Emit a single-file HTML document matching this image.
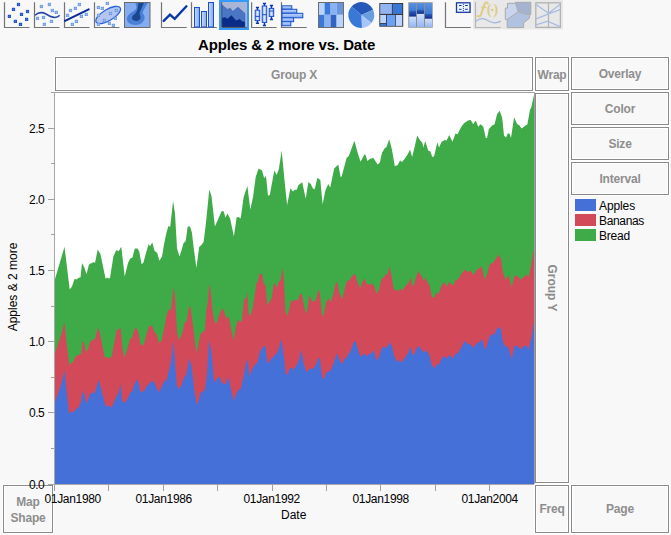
<!DOCTYPE html>
<html><head><meta charset="utf-8"><style>
html,body{margin:0;padding:0;}
body{width:671px;height:535px;background:#f8f8f8;position:relative;overflow:hidden;font-family:"Liberation Sans",sans-serif;}
.box{position:absolute;box-sizing:border-box;border:1px solid #8a8a8a;box-shadow:0 0 0 1px #fff, inset 0 0 0 1px #fff;color:#8e8e8e;font-weight:bold;font-size:12px;text-align:center;letter-spacing:-0.2px;}
.t{position:absolute;white-space:nowrap;}
svg{position:absolute;left:0;top:0;}
</style></head><body>
<svg width="671" height="535" viewBox="0 0 671 535">
<defs>
<linearGradient id="barg" x1="0" y1="0" x2="1" y2="0"><stop offset="0" stop-color="#c8dcff"/><stop offset="1" stop-color="#80a8f0"/></linearGradient><linearGradient id="boxg" x1="0" y1="0" x2="1" y2="0"><stop offset="0" stop-color="#80a8f0"/><stop offset="0.5" stop-color="#dce8ff"/><stop offset="1" stop-color="#80a8f0"/></linearGradient>
<linearGradient id="barh" x1="0" y1="0" x2="0" y2="1"><stop offset="0" stop-color="#c8dcff"/><stop offset="1" stop-color="#78a2ee"/></linearGradient>
<linearGradient id="mz1" x1="0" y1="0" x2="0" y2="1"><stop offset="0" stop-color="#5b92e2"/><stop offset="1" stop-color="#3a7ad8"/></linearGradient><linearGradient id="mz2" x1="0" y1="0" x2="0" y2="1"><stop offset="0" stop-color="#2f5fb8"/><stop offset="1" stop-color="#0a2d92"/></linearGradient><linearGradient id="mz3" x1="0" y1="0" x2="0" y2="1"><stop offset="0" stop-color="#cfe0ff"/><stop offset="1" stop-color="#94b6f2"/></linearGradient>
</defs>
<path d="M4.5,2.3 V27.5 H29.5" fill="none" stroke="#747474" stroke-width="1.2"/>
<rect x="16.9" y="2.9" width="3.2" height="3.2" fill="#1a4cc0"/><rect x="18.25" y="2.9" width="0.5" height="3.2" fill="#4d7ddc"/><rect x="16.9" y="4.25" width="3.2" height="0.5" fill="#4d7ddc"/>
<rect x="11.9" y="7.8" width="3.2" height="3.2" fill="#1a4cc0"/><rect x="13.25" y="7.8" width="0.5" height="3.2" fill="#4d7ddc"/><rect x="11.9" y="9.15" width="3.2" height="0.5" fill="#4d7ddc"/>
<rect x="25.9" y="9.9" width="3.2" height="3.2" fill="#1a4cc0"/><rect x="27.25" y="9.9" width="0.5" height="3.2" fill="#4d7ddc"/><rect x="25.9" y="11.25" width="3.2" height="0.5" fill="#4d7ddc"/>
<rect x="19.9" y="12.8" width="3.2" height="3.2" fill="#1a4cc0"/><rect x="21.25" y="12.8" width="0.5" height="3.2" fill="#4d7ddc"/><rect x="19.9" y="14.15" width="3.2" height="0.5" fill="#4d7ddc"/>
<rect x="7.8" y="14.8" width="3.2" height="3.2" fill="#1a4cc0"/><rect x="9.15" y="14.8" width="0.5" height="3.2" fill="#4d7ddc"/><rect x="7.8" y="16.15" width="3.2" height="0.5" fill="#4d7ddc"/>
<rect x="25.0" y="17.8" width="3.2" height="3.2" fill="#1a4cc0"/><rect x="26.35" y="17.8" width="0.5" height="3.2" fill="#4d7ddc"/><rect x="25.0" y="19.15" width="3.2" height="0.5" fill="#4d7ddc"/>
<rect x="13.8" y="19.8" width="3.2" height="3.2" fill="#1a4cc0"/><rect x="15.15" y="19.8" width="0.5" height="3.2" fill="#4d7ddc"/><rect x="13.8" y="21.15" width="3.2" height="0.5" fill="#4d7ddc"/>
<rect x="18.9" y="22.8" width="3.2" height="3.2" fill="#1a4cc0"/><rect x="20.25" y="22.8" width="0.5" height="3.2" fill="#4d7ddc"/><rect x="18.9" y="24.15" width="3.2" height="0.5" fill="#4d7ddc"/>
<path d="M34.5,2.3 V27.5 H59.5" fill="none" stroke="#747474" stroke-width="1.2"/>
<rect x="39.8" y="4.9" width="3.2" height="3.2" fill="#6a96e4"/><rect x="41.15" y="4.9" width="0.5" height="3.2" fill="#a6c2f2"/><rect x="39.8" y="6.25" width="3.2" height="0.5" fill="#a6c2f2"/>
<rect x="47.8" y="2.9" width="3.2" height="3.2" fill="#6a96e4"/><rect x="49.15" y="2.9" width="0.5" height="3.2" fill="#a6c2f2"/><rect x="47.8" y="4.25" width="3.2" height="0.5" fill="#a6c2f2"/>
<rect x="50.8" y="8.9" width="3.2" height="3.2" fill="#6a96e4"/><rect x="52.15" y="8.9" width="0.5" height="3.2" fill="#a6c2f2"/><rect x="50.8" y="10.25" width="3.2" height="0.5" fill="#a6c2f2"/>
<rect x="54.7" y="10.8" width="3.2" height="3.2" fill="#6a96e4"/><rect x="56.05" y="10.8" width="0.5" height="3.2" fill="#a6c2f2"/><rect x="54.7" y="12.15" width="3.2" height="0.5" fill="#a6c2f2"/>
<rect x="35.9" y="16.8" width="3.2" height="3.2" fill="#6a96e4"/><rect x="37.25" y="16.8" width="0.5" height="3.2" fill="#a6c2f2"/><rect x="35.9" y="18.15" width="3.2" height="0.5" fill="#a6c2f2"/>
<rect x="41.9" y="15.9" width="3.2" height="3.2" fill="#6a96e4"/><rect x="43.25" y="15.9" width="0.5" height="3.2" fill="#a6c2f2"/><rect x="41.9" y="17.25" width="3.2" height="0.5" fill="#a6c2f2"/>
<rect x="49.9" y="19.8" width="3.2" height="3.2" fill="#6a96e4"/><rect x="51.25" y="19.8" width="0.5" height="3.2" fill="#a6c2f2"/><rect x="49.9" y="21.15" width="3.2" height="0.5" fill="#a6c2f2"/>
<rect x="42.8" y="22.8" width="3.2" height="3.2" fill="#6a96e4"/><rect x="44.15" y="22.8" width="0.5" height="3.2" fill="#a6c2f2"/><rect x="42.8" y="24.15" width="3.2" height="0.5" fill="#a6c2f2"/>
<path d="M35,15.3 C38,12.5 42,11.8 46,14 C50,16.5 53,17.8 56,17.3 C58,17 59,16 59.6,15.3" fill="none" stroke="#2548a8" stroke-width="1.5"/>
<path d="M64.5,2.3 V27.5 H89.5" fill="none" stroke="#747474" stroke-width="1.2"/>
<rect x="77.8" y="2.9" width="3.2" height="3.2" fill="#6a96e4"/><rect x="79.15" y="2.9" width="0.5" height="3.2" fill="#a6c2f2"/><rect x="77.8" y="4.25" width="3.2" height="0.5" fill="#a6c2f2"/>
<rect x="73.8" y="6.8" width="3.2" height="3.2" fill="#6a96e4"/><rect x="75.15" y="6.8" width="0.5" height="3.2" fill="#a6c2f2"/><rect x="73.8" y="8.15" width="3.2" height="0.5" fill="#a6c2f2"/>
<rect x="68.9" y="8.9" width="3.2" height="3.2" fill="#6a96e4"/><rect x="70.25" y="8.9" width="0.5" height="3.2" fill="#a6c2f2"/><rect x="68.9" y="10.25" width="3.2" height="0.5" fill="#a6c2f2"/>
<rect x="65.9" y="13.8" width="3.2" height="3.2" fill="#6a96e4"/><rect x="67.25" y="13.8" width="0.5" height="3.2" fill="#a6c2f2"/><rect x="65.9" y="15.15" width="3.2" height="0.5" fill="#a6c2f2"/>
<rect x="84.7" y="12.8" width="3.2" height="3.2" fill="#6a96e4"/><rect x="86.05" y="12.8" width="0.5" height="3.2" fill="#a6c2f2"/><rect x="84.7" y="14.15" width="3.2" height="0.5" fill="#a6c2f2"/>
<rect x="79.8" y="14.8" width="3.2" height="3.2" fill="#6a96e4"/><rect x="81.15" y="14.8" width="0.5" height="3.2" fill="#a6c2f2"/><rect x="79.8" y="16.15" width="3.2" height="0.5" fill="#a6c2f2"/>
<rect x="74.8" y="19.8" width="3.2" height="3.2" fill="#6a96e4"/><rect x="76.15" y="19.8" width="0.5" height="3.2" fill="#a6c2f2"/><rect x="74.8" y="21.15" width="3.2" height="0.5" fill="#a6c2f2"/>
<rect x="70.8" y="22.8" width="3.2" height="3.2" fill="#6a96e4"/><rect x="72.15" y="22.8" width="0.5" height="3.2" fill="#a6c2f2"/><rect x="70.8" y="24.15" width="3.2" height="0.5" fill="#a6c2f2"/>
<path d="M65,20.9 L88.7,9.4" stroke="#0b2b98" stroke-width="2.1" stroke-linecap="round"/>
<path d="M94.5,2.3 V27.5 H119.5" fill="none" stroke="#747474" stroke-width="1.2"/>
<ellipse cx="108.2" cy="15" rx="14" ry="5.6" transform="rotate(-31 108.2 15)" fill="#b4c6f0" stroke="#2a64dc" stroke-width="1.3"/>
<rect x="105.7" y="1.9" width="3.2" height="3.2" fill="#6a96e4"/><rect x="107.05" y="1.9" width="0.5" height="3.2" fill="#a6c2f2"/><rect x="105.7" y="3.25" width="3.2" height="0.5" fill="#a6c2f2"/>
<rect x="96.8" y="5.9" width="3.2" height="3.2" fill="#6a96e4"/><rect x="98.15" y="5.9" width="0.5" height="3.2" fill="#a6c2f2"/><rect x="96.8" y="7.25" width="3.2" height="0.5" fill="#a6c2f2"/>
<rect x="100.8" y="6.8" width="3.2" height="3.2" fill="#6a96e4"/><rect x="102.15" y="6.8" width="0.5" height="3.2" fill="#a6c2f2"/><rect x="100.8" y="8.15" width="3.2" height="0.5" fill="#a6c2f2"/>
<rect x="114.7" y="8.9" width="3.2" height="3.2" fill="#6a96e4"/><rect x="116.05" y="8.9" width="0.5" height="3.2" fill="#a6c2f2"/><rect x="114.7" y="10.25" width="3.2" height="0.5" fill="#a6c2f2"/>
<rect x="108.9" y="11.9" width="3.2" height="3.2" fill="#6a96e4"/><rect x="110.25" y="11.9" width="0.5" height="3.2" fill="#a6c2f2"/><rect x="108.9" y="13.25" width="3.2" height="0.5" fill="#a6c2f2"/>
<rect x="96.8" y="13.8" width="3.2" height="3.2" fill="#6a96e4"/><rect x="98.15" y="13.8" width="0.5" height="3.2" fill="#a6c2f2"/><rect x="96.8" y="15.15" width="3.2" height="0.5" fill="#a6c2f2"/>
<rect x="113.8" y="16.8" width="3.2" height="3.2" fill="#6a96e4"/><rect x="115.15" y="16.8" width="0.5" height="3.2" fill="#a6c2f2"/><rect x="113.8" y="18.15" width="3.2" height="0.5" fill="#a6c2f2"/>
<rect x="102.8" y="18.9" width="3.2" height="3.2" fill="#6a96e4"/><rect x="104.15" y="18.9" width="0.5" height="3.2" fill="#a6c2f2"/><rect x="102.8" y="20.25" width="3.2" height="0.5" fill="#a6c2f2"/>
<rect x="107.8" y="21.8" width="3.2" height="3.2" fill="#6a96e4"/><rect x="109.15" y="21.8" width="0.5" height="3.2" fill="#a6c2f2"/><rect x="107.8" y="23.15" width="3.2" height="0.5" fill="#a6c2f2"/>
<rect x="96.8" y="22.8" width="3.2" height="3.2" fill="#6a96e4"/><rect x="98.15" y="22.8" width="0.5" height="3.2" fill="#a6c2f2"/><rect x="96.8" y="24.15" width="3.2" height="0.5" fill="#a6c2f2"/>
<rect x="111.8" y="23.8" width="3.2" height="3.2" fill="#6a96e4"/><rect x="113.15" y="23.8" width="0.5" height="3.2" fill="#a6c2f2"/><rect x="111.8" y="25.15" width="3.2" height="0.5" fill="#a6c2f2"/>
<rect x="124.5" y="2.5" width="25.5" height="25" fill="#86acf0" stroke="#6b6b6b" stroke-width="1"/>
<path d="M135.3,3 L147.8,3 C146,6 143.5,10 142.5,13 C146,16 145.5,22 139,24.5 C132,26 126,23 127,18 C128,13 134,12 136,9 C137,7 136,5 135.3,3 Z" fill="#4a7fd6"/>
<path d="M138.5,3 L144,3 C142,7 140,11 139.5,14 C141.5,17 140.5,21 136.5,21 C132,21 131,17.5 133,15.5 C135,14 137,12 137.5,9 Z" fill="#1b4690"/>
<path d="M161.5,2.3 V27.5 H186.7" fill="none" stroke="#747474" stroke-width="1.2"/>
<path d="M163.7,20.9 L170,14.7 L174.7,18.8 L186.4,6.3" fill="none" stroke="#0b38a8" stroke-width="2.4" stroke-linecap="round" stroke-linejoin="miter"/>
<path d="M191.5,2.3 V27.5 H216.7" fill="none" stroke="#747474" stroke-width="1.2"/>
<rect x="194.5" y="7.5" width="5.0" height="19.5" fill="url(#barg)" stroke="#1a50d0" stroke-width="1"/>
<rect x="201.5" y="11.5" width="5.0" height="15.5" fill="url(#barg)" stroke="#1a50d0" stroke-width="1"/>
<rect x="208.5" y="2.5" width="5.0" height="24.5" fill="url(#barg)" stroke="#1a50d0" stroke-width="1"/>
<rect x="219" y="0" width="30" height="30" fill="#3399ff"/>
<rect x="221" y="2" width="26" height="26" fill="#a9b5d6"/>
<path d="M222,5.1 L227.4,9.5 L230.2,8.3 L232.8,11.5 L237.9,7.3 L244.9,13.4 L244.9,27 L222,27 Z" fill="#4b76c4" stroke="#2b58b0" stroke-width="0.6"/>
<path d="M222,18.1 L225.1,17.2 L227.4,18.8 L231.5,15.3 L236,20.4 L239.8,19.1 L242,21.3 L244.9,22 L244.9,27 L222,27 Z" fill="#0b2b88"/>
<path d="M221.7,2.2 V27.4 H246.8" fill="none" stroke="#555" stroke-width="1"/>
<path d="M251.6,2.3 V27.5 H276.7" fill="none" stroke="#747474" stroke-width="1.2"/>
<path d="M257.45,7.5 V10.2 M257.45,20.6 V23.3 M255.85,7.5 H259.05 M255.85,23.3 H259.05" stroke="#0b3aa8" stroke-width="1.5"/>
<rect x="255.2" y="10.2" width="4.5" height="10.400000000000002" fill="url(#boxg)" stroke="#1a50d0" stroke-width="1"/>
<path d="M255.2,16.4 H259.7" stroke="#1a50d0" stroke-width="1"/>
<path d="M264.45,3.5 V6 M264.45,22.4 V25.4 M262.84999999999997,3.5 H266.05 M262.84999999999997,25.4 H266.05" stroke="#0b3aa8" stroke-width="1.5"/>
<rect x="262.2" y="6" width="4.5" height="16.4" fill="url(#boxg)" stroke="#1a50d0" stroke-width="1"/>
<path d="M262.2,14.7 H266.7" stroke="#1a50d0" stroke-width="1"/>
<path d="M271.45,5.5 V8.4 M271.45,16.4 V19.4 M269.84999999999997,5.5 H273.05 M269.84999999999997,19.4 H273.05" stroke="#0b3aa8" stroke-width="1.5"/>
<rect x="269.2" y="8.4" width="4.5" height="7.999999999999998" fill="url(#boxg)" stroke="#1a50d0" stroke-width="1"/>
<path d="M269.2,11 H273.7" stroke="#1a50d0" stroke-width="1"/>
<path d="M281.5,2.3 V27.5 H306.8" fill="none" stroke="#747474" stroke-width="1.2"/>
<rect x="282" y="5.8" width="9.800000000000011" height="3.500000000000001" fill="url(#barh)" stroke="#1a50d0" stroke-width="1"/>
<rect x="282" y="9.3" width="14.800000000000011" height="4.0" fill="url(#barh)" stroke="#1a50d0" stroke-width="1"/>
<rect x="282" y="13.3" width="20.80000000000001" height="4.5" fill="url(#barh)" stroke="#1a50d0" stroke-width="1"/>
<rect x="282" y="17.8" width="11.600000000000023" height="3.8999999999999986" fill="url(#barh)" stroke="#1a50d0" stroke-width="1"/>
<rect x="282" y="21.7" width="8.800000000000011" height="4.100000000000001" fill="url(#barh)" stroke="#1a50d0" stroke-width="1"/>
<rect x="318.5" y="2.5" width="6.100000000000023" height="12.3" fill="#b9d3ff"/>
<rect x="318.5" y="14.8" width="6.100000000000023" height="12.7" fill="#3b78d9"/>
<rect x="324.6" y="2.5" width="6.0" height="12.3" fill="#3b78d9"/>
<rect x="324.6" y="14.8" width="6.0" height="12.7" fill="#8ab1f1"/>
<rect x="330.6" y="2.5" width="6.0" height="12.3" fill="#8ab1f1"/>
<rect x="330.6" y="14.8" width="6.0" height="12.7" fill="#3263c2"/>
<rect x="336.6" y="2.5" width="6.899999999999977" height="12.3" fill="#6a95dc"/>
<rect x="336.6" y="14.8" width="6.899999999999977" height="12.7" fill="#b9d3ff"/>
<rect x="318.5" y="2.5" width="25" height="25" fill="none" stroke="#6e6e6e" stroke-width="1"/>
<path d="M361.3,15 L351.56,6.54 A12.9,12.9 0 0 1 373.08,9.75 Z" fill="#2457b8"/>
<path d="M361.3,15 L373.08,9.75 A12.9,12.9 0 0 1 371.47,22.94 Z" fill="#6a9de0"/>
<path d="M361.3,15 L371.47,22.94 A12.9,12.9 0 0 1 361.98,27.88 Z" fill="#a9c5f8"/>
<path d="M361.3,15 L361.98,27.88 A12.9,12.9 0 0 1 351.56,6.54 Z" fill="#3a78d8"/>
<rect x="379.3" y="3" width="23.9" height="23.7" fill="#3a3a3a"/>
<rect x="380.2" y="3.9" width="11.699999999999989" height="10.0" fill="#93b4f0"/>
<rect x="392.7" y="3.9" width="9.5" height="10.0" fill="#3a78d8"/>
<rect x="380.2" y="15" width="5.800000000000011" height="8" fill="#b9d4ff"/>
<rect x="380.2" y="23.8" width="5.800000000000011" height="2.099999999999998" fill="#3a78d8"/>
<rect x="386.9" y="15" width="8.100000000000023" height="10.899999999999999" fill="#6aa0f8"/>
<rect x="395.8" y="15" width="6.399999999999977" height="10.899999999999999" fill="#b9d4ff"/>
<rect x="408.3" y="2.3" width="24.4" height="25.4" fill="#8e8e8e"/>
<rect x="409.2" y="3" width="6.800000000000011" height="8" fill="url(#mz1)"/>
<rect x="409.2" y="11" width="6.800000000000011" height="5.699999999999999" fill="url(#mz2)"/>
<rect x="409.2" y="16.7" width="6.800000000000011" height="10.3" fill="url(#mz3)"/>
<rect x="417" y="3" width="7" height="7" fill="url(#mz1)"/>
<rect x="417" y="10" width="7" height="3.9000000000000004" fill="url(#mz2)"/>
<rect x="417" y="13.9" width="7" height="13.1" fill="url(#mz3)"/>
<rect x="425" y="3" width="7" height="11" fill="url(#mz1)"/>
<rect x="425" y="14" width="7" height="4.800000000000001" fill="url(#mz2)"/>
<rect x="425" y="18.8" width="7" height="8.2" fill="url(#mz3)"/>
<path d="M445.5,2.3 V27.5 H470.8" fill="none" stroke="#747474" stroke-width="1.2"/>
<rect x="457.5" y="3.5" width="13.6" height="9.6" fill="#9a9a9a" opacity="0.5"/>
<rect x="456.5" y="2.8" width="13.5" height="9.5" fill="#eef4ff" stroke="#1a3aa8" stroke-width="1.3"/>
<path d="M459,5.5 H461.6 M465,5.5 H467.8 M459,9.3 H461.6 M465,9.3 H467.8" stroke="#1a3aa8" stroke-width="1"/>
<rect x="462.9" y="3.8" width="1" height="1" fill="#1a3aa8"/>
<rect x="462.9" y="6.0" width="1" height="1" fill="#1a3aa8"/>
<rect x="462.9" y="7.9" width="1" height="1" fill="#1a3aa8"/>
<rect x="462.9" y="10.0" width="1" height="1" fill="#1a3aa8"/>
<rect x="473" y="0" width="90" height="29.5" fill="#e8e8e8"/>
<path d="M475.5,2.3 V27.5 H500.8" fill="none" stroke="#b4b4b4" stroke-width="1.2"/>
<path d="M487.7,3.3 C487.3,2.1 485.3,2.0 484.4,4.4 L480.9,14.8 C480.4,16.4 479,16.8 477.6,16.1" fill="none" stroke="#e0cb88" stroke-width="2.1" stroke-linecap="round"/><path d="M481.3,7.4 H486.2" stroke="#e0cb88" stroke-width="1.5"/>
<text x="486.8" y="14" font-family="Liberation Serif" font-weight="bold" font-size="14" fill="#e0cb88">(</text><text x="493.6" y="14" font-family="Liberation Serif" font-weight="bold" font-size="14" fill="#e0cb88">)</text><circle cx="492.2" cy="10" r="1.3" fill="#e0cb88"/>
<path d="M476,21.2 C479,18.5 482,17.6 486,19.5 C490,21.8 493,23.2 496,22.7 C498.5,22.3 500,21.5 500.8,20.9" fill="none" stroke="#a2b5d8" stroke-width="1.3"/>
<path d="M507.5,3.3 L515.5,3.3 L518.2,11.7 L507.8,19.4 L505.3,19.4 L505.3,8.1 L507.5,8.1 Z" fill="#c9d5ec"/>
<path d="M515.5,2.3 L530.8,2.3 L530.8,14.4 L525.7,14.1 L521,12.3 L518.2,11.7 Z" fill="#a5b3d1"/>
<path d="M518.2,11.7 L521,12.3 L525.7,14.1 L529.6,15 L529.6,18 L523.6,23 L523.6,27.6 L507.2,27.6 L507.2,19.8 Z" fill="#b1c1e0"/>
<path d="M507.5,3.3 L515.5,3.3 L515.5,2.3 L530.8,2.3 L530.8,14.4 L529.6,15 L529.6,18 L523.6,23 L523.6,27.6 L507.2,27.6 L507.2,19.4 L505.3,19.4 L505.3,8.1 L507.5,8.1 Z M515.5,3.3 L518.2,11.7 L525.7,14.1 L530.8,14.4 M518.2,11.7 L507.5,19.4" fill="none" stroke="#a9a9a9" stroke-width="1"/>
<rect x="535.8" y="2.8" width="24.6" height="24.6" fill="none" stroke="#b2b2b2" stroke-width="1.3"/>
<path d="M548.5,2.8 V27.4" stroke="#b2b2b2" stroke-width="1.2"/>
<path d="M536,4.5 L548.5,13.2 L560,4.5 M536,18.8 L548.5,13.8 L560,9.6 M536,24.8 L548,21.2 M549,21.8 L560,26.6" fill="none" stroke="#a9bde2" stroke-width="1.3"/>
<rect x="55" y="93" width="479" height="391" fill="#fff"/>
<path d="M54,484 L54.0,281.0 L55.1,278.7 L64.5,246.8 L69.7,289.5 L72.0,286.5 L74.6,278.7 L76.4,279.4 L79.1,277.6 L80.5,277.6 L82.0,263.0 L84.3,267.5 L86.5,274.2 L88.8,265.2 L89.9,263.7 L92.1,263.0 L93.9,261.9 L95.0,263.0 L97.7,249.5 L100.4,254.0 L105.6,278.7 L107.2,277.6 L109.0,278.7 L110.1,277.6 L113.4,256.3 L116.4,250.0 L118.6,251.3 L121.3,246.8 L124.7,276.5 L128.0,263.0 L130.3,258.5 L132.5,257.4 L134.8,248.4 L137.4,248.4 L139.2,251.3 L141.5,264.1 L143.3,263.0 L146.0,252.9 L148.7,243.9 L150.0,246.2 L152.3,242.4 L154.5,250.7 L157.2,252.9 L159.4,260.8 L162.1,256.3 L163.9,245.0 L166.2,233.8 L168.4,226.0 L170.2,227.1 L173.1,201.1 L175.0,213.5 L177.0,248.2 L179.5,256.6 L181.8,249.3 L183.5,243.2 L185.7,240.9 L187.7,226.4 L190.0,226.4 L191.9,232.5 L193.6,247.1 L196.4,268.0 L199.2,247.1 L201.4,244.9 L203.6,242.0 L205.9,223.5 L209.3,189.4 L211.5,196.2 L214.9,226.5 L218.2,219.0 L221.6,211.2 L223.6,211.2 L225.5,217.4 L227.4,213.5 L230.1,218.6 L233.9,236.5 L236.6,217.5 L238.4,217.0 L240.7,218.6 L243.6,197.3 L247.4,186.1 L250.3,209.6 L253.0,197.3 L255.7,177.1 L258.6,168.6 L262.0,170.4 L264.2,178.2 L266.0,176.0 L268.0,195.7 L269.8,195.0 L274.3,170.4 L276.6,174.9 L278.8,169.3 L281.7,150.6 L284.4,179.3 L287.1,205.0 L290.5,187.9 L292.7,191.5 L295.0,189.7 L296.8,189.7 L298.3,185.2 L302.2,182.3 L305.7,198.7 L308.4,181.9 L310.7,184.1 L312.9,188.6 L314.7,189.3 L317.4,177.8 L320.3,180.1 L322.6,204.3 L325.3,190.8 L328.2,184.1 L330.2,187.5 L334.2,168.4 L338.3,164.6 L340.5,176.7 L341.6,176.7 L346.6,157.9 L348.8,156.1 L354.4,140.8 L357.3,151.6 L360.5,161.7 L364.5,154.3 L365.6,155.0 L367.4,161.0 L370.1,158.8 L373.5,157.9 L377.5,164.6 L379.8,162.8 L382.0,152.7 L384.7,148.2 L386.5,147.1 L389.2,139.3 L391.9,149.3 L394.8,166.2 L397.7,165.1 L400.0,160.5 L402.0,162.0 L405.0,158.2 L407.6,154.4 L410.1,149.4 L412.1,157.0 L414.6,146.9 L417.2,135.5 L420.2,140.6 L422.2,142.6 L423.5,147.6 L425.2,141.1 L428.3,150.7 L430.3,151.2 L432.3,157.0 L434.1,156.2 L437.3,142.6 L439.1,147.6 L441.6,141.8 L444.9,140.0 L446.7,140.6 L449.2,135.0 L452.5,141.8 L455.5,133.5 L457.5,134.3 L461.3,126.7 L464.3,122.9 L468.1,120.4 L470.7,119.9 L473.2,124.2 L475.7,120.4 L478.2,126.7 L480.7,124.2 L483.3,126.7 L485.8,138.0 L487.1,138.0 L488.8,129.2 L492.1,125.4 L494.6,124.2 L497.1,114.1 L499.7,110.8 L502.2,117.9 L504.0,135.5 L506.0,137.5 L508.0,133.0 L509.8,134.3 L511.0,138.0 L514.1,117.3 L517.3,124.2 L519.1,124.9 L521.6,128.4 L524.9,125.9 L527.4,124.2 L530.0,109.8 L531.2,107.8 L534.0,95.0 L534,484 Z" fill="#3faa48"/>
<path d="M54,484 L54.0,355.0 L55.2,353.1 L57.7,344.9 L61.5,333.6 L64.5,322.4 L66.7,343.4 L69.3,365.0 L71.6,362.8 L73.1,362.1 L75.7,356.1 L78.7,355.0 L81.2,353.5 L82.7,340.7 L84.4,344.1 L85.9,351.6 L87.6,350.5 L89.9,342.6 L92.1,340.1 L94.1,339.2 L95.1,339.6 L97.8,327.7 L99.6,331.4 L101.9,343.4 L104.8,357.6 L107.1,357.1 L108.6,358.6 L111.6,356.8 L113.8,345.6 L116.8,329.9 L119.0,328.9 L120.5,327.7 L122.5,347.9 L124.3,357.6 L127.3,349.3 L130.3,338.1 L131.8,338.8 L133.7,331.3 L135.7,327.6 L137.5,329.8 L138.7,334.3 L140.5,344.0 L143.5,345.5 L146.1,335.8 L149.1,325.6 L150.6,326.5 L152.1,325.0 L153.9,331.3 L156.6,334.3 L159.2,343.3 L161.4,341.0 L164.7,326.1 L166.6,314.9 L168.9,309.2 L170.7,310.4 L173.7,287.6 L174.9,295.4 L177.1,332.8 L179.3,340.3 L182.3,332.8 L184.6,323.1 L186.8,320.8 L189.1,305.9 L190.6,307.4 L192.8,323.8 L196.4,353.5 L200.3,334.3 L203.3,331.3 L204.8,331.0 L206.3,311.0 L207.8,301.9 L209.3,283.9 L210.5,289.2 L212.7,312.3 L215.0,323.6 L216.8,322.8 L219.5,313.8 L222.1,308.6 L223.9,310.8 L226.2,319.1 L227.7,316.1 L229.2,318.3 L231.4,330.3 L233.7,340.0 L235.9,326.5 L238.1,319.8 L240.1,322.1 L241.9,320.6 L244.1,299.6 L246.1,298.1 L247.1,292.1 L248.6,313.8 L250.1,316.1 L252.4,309.3 L254.6,295.9 L256.5,282.4 L257.6,283.2 L259.5,273.5 L262.1,274.2 L264.0,285.4 L265.5,283.9 L267.3,304.9 L269.6,301.9 L271.8,297.4 L274.0,282.4 L277.0,287.7 L279.0,280.9 L280.5,280.9 L282.3,267.5 L283.8,277.9 L285.3,311.0 L287.3,316.3 L289.2,308.8 L291.2,299.8 L293.0,301.3 L295.2,299.8 L297.5,300.6 L299.7,295.3 L301.6,293.1 L303.4,302.8 L305.7,313.3 L307.2,310.3 L309.4,295.3 L312.1,301.0 L314.7,301.3 L316.1,299.1 L318.4,289.3 L319.9,293.1 L322.1,315.5 L323.6,315.5 L326.2,302.1 L328.9,298.3 L330.7,302.1 L333.0,295.3 L335.6,284.1 L337.5,281.9 L339.3,293.1 L342.3,299.1 L345.3,286.4 L347.1,280.4 L349.0,280.7 L351.0,278.1 L353.5,274.1 L355.5,275.1 L357.3,281.9 L360.3,288.6 L362.2,282.3 L364.8,278.6 L366.7,283.8 L369.0,285.0 L372.0,283.5 L373.8,285.3 L376.4,293.6 L378.7,290.6 L381.7,278.6 L383.9,277.6 L386.2,273.4 L387.4,274.9 L389.6,266.6 L391.7,276.4 L393.6,289.1 L396.6,290.6 L398.6,291.3 L400.1,288.3 L402.2,290.6 L406.1,285.3 L408.6,283.1 L410.5,277.6 L412.3,286.1 L414.1,284.6 L418.0,271.1 L419.8,274.1 L421.3,275.6 L423.6,280.8 L425.5,277.9 L427.3,282.3 L429.5,285.3 L432.1,297.3 L434.8,297.3 L436.0,292.9 L438.8,293.8 L441.6,285.4 L444.4,282.1 L446.8,286.4 L449.5,281.7 L452.8,285.8 L455.6,280.2 L458.4,278.9 L461.8,273.3 L465.0,269.5 L467.8,272.0 L470.6,270.5 L473.8,275.1 L476.2,270.5 L479.0,268.2 L481.8,266.4 L484.6,279.8 L486.8,275.1 L489.8,263.9 L493.0,263.0 L496.2,258.3 L498.6,254.6 L501.0,259.3 L502.9,272.3 L505.5,279.8 L508.5,275.1 L511.7,287.3 L514.5,275.7 L517.3,275.7 L521.0,279.8 L523.9,277.0 L526.7,274.2 L528.5,277.9 L531.3,264.9 L534.0,248.0 L534,484 Z" fill="#d24a5a"/>
<path d="M54,484 L54.0,402.0 L55.2,401.6 L57.7,394.9 L61.5,382.9 L64.5,370.2 L66.7,391.9 L69.0,413.6 L71.6,411.6 L73.1,412.5 L76.1,409.1 L78.7,407.6 L80.9,402.3 L82.7,391.1 L84.7,395.6 L86.1,403.1 L88.1,400.1 L90.2,393.7 L92.6,392.2 L94.4,394.1 L96.6,386.6 L98.9,379.9 L101.9,391.9 L105.6,406.1 L107.8,405.6 L111.6,407.6 L114.6,400.8 L117.1,395.6 L118.3,393.4 L120.5,383.6 L122.3,401.6 L124.3,403.1 L127.3,399.3 L130.3,392.6 L132.2,391.3 L134.5,383.8 L136.7,380.1 L138.2,381.6 L140.5,392.5 L142.0,390.6 L143.5,392.1 L146.4,386.8 L149.4,383.5 L152.4,380.8 L154.7,383.1 L158.4,392.5 L161.4,387.6 L164.4,380.8 L166.6,380.8 L170.4,364.4 L171.9,355.4 L173.4,340.5 L174.9,359.9 L176.7,385.3 L178.6,389.1 L181.6,385.3 L183.8,377.9 L186.1,374.9 L187.6,367.4 L189.5,358.4 L191.3,364.4 L194.3,389.8 L196.8,404.8 L198.8,400.3 L200.6,392.8 L203.3,391.3 L204.8,390.6 L207.0,374.9 L208.5,349.4 L209.3,340.4 L211.2,349.3 L214.1,382.4 L216.6,379.6 L218.9,376.6 L220.0,377.4 L221.7,383.0 L223.9,383.5 L226.2,384.1 L227.3,377.9 L229.0,379.6 L233.5,400.9 L236.3,393.6 L238.5,389.7 L240.7,389.1 L243.5,376.8 L246.1,362.8 L247.6,359.1 L249.4,376.3 L252.4,368.8 L255.3,364.3 L257.6,362.1 L259.8,352.3 L262.1,347.9 L265.5,345.6 L267.3,362.8 L268.8,362.8 L271.0,359.1 L274.8,355.3 L277.8,351.6 L281.5,339.6 L283.8,356.8 L285.8,374.8 L287.7,374.0 L290.0,368.0 L291.5,368.0 L293.7,369.5 L296.7,365.0 L299.0,359.8 L301.6,350.1 L303.4,362.8 L306.4,372.5 L309.4,368.8 L311.7,369.1 L313.9,368.0 L316.1,364.3 L318.7,357.6 L319.9,359.1 L322.1,377.0 L324.1,379.3 L325.9,373.3 L328.1,371.0 L330.1,371.5 L332.6,365.8 L334.8,359.8 L337.5,353.1 L339.6,360.6 L342.3,364.3 L344.1,359.1 L346.1,358.3 L349.0,353.1 L350.5,351.6 L353.5,342.6 L355.5,341.1 L357.3,347.1 L360.3,356.8 L363.0,354.3 L365.2,354.6 L366.7,356.5 L368.2,354.3 L370.5,354.0 L372.7,351.0 L374.2,351.6 L375.7,358.0 L377.6,360.6 L379.4,355.8 L382.1,347.6 L383.9,347.1 L385.1,348.6 L386.6,346.1 L387.7,347.6 L389.6,342.0 L391.7,345.3 L394.1,355.8 L397.1,362.1 L399.6,360.3 L401.6,362.5 L404.1,358.8 L407.9,353.6 L410.5,346.5 L412.3,354.3 L413.8,355.0 L415.6,351.3 L418.0,346.1 L420.1,347.6 L421.6,349.8 L423.6,352.8 L425.5,350.6 L428.0,352.8 L429.5,355.8 L431.8,364.8 L434.5,368.5 L437.0,364.4 L438.8,364.4 L442.5,357.3 L445.0,356.4 L446.8,358.8 L449.5,354.5 L452.8,358.8 L455.6,353.9 L458.4,352.6 L462.2,345.7 L465.0,340.5 L467.8,344.2 L470.6,344.6 L473.4,347.9 L476.7,343.3 L479.4,342.3 L482.4,339.0 L484.6,349.4 L486.8,346.1 L489.8,335.8 L491.7,334.5 L494.0,334.9 L496.7,329.3 L499.2,327.0 L501.0,329.3 L502.9,342.3 L506.1,347.6 L508.0,346.1 L511.7,359.2 L514.5,345.7 L517.3,345.7 L521.0,349.4 L523.9,346.1 L526.7,345.7 L528.5,349.8 L531.3,338.2 L534.0,322.0 L534,484 Z" fill="#4470d8"/>
<path d="M51,92.5 H534" stroke="#a0a0a0" stroke-width="1"/>
<path d="M54.5,92 V490" stroke="#a8a8a8" stroke-width="1"/>
<path d="M534.5,92 V484" stroke="#a0a0a0" stroke-width="1"/>
<path d="M48,484.5 H534" stroke="#a8a8a8" stroke-width="1"/>
<path d="M48,484.5 H54" stroke="#a0a0a0" stroke-width="1"/>
<path d="M48,412.5 H54" stroke="#a0a0a0" stroke-width="1"/>
<path d="M48,341.5 H54" stroke="#a0a0a0" stroke-width="1"/>
<path d="M48,270.5 H54" stroke="#a0a0a0" stroke-width="1"/>
<path d="M48,199.5 H54" stroke="#a0a0a0" stroke-width="1"/>
<path d="M48,128.5 H54" stroke="#a0a0a0" stroke-width="1"/>
<path d="M51,448.5 H54" stroke="#a0a0a0" stroke-width="1"/>
<path d="M51,377.5 H54" stroke="#a0a0a0" stroke-width="1"/>
<path d="M51,306.5 H54" stroke="#a0a0a0" stroke-width="1"/>
<path d="M51,234.5 H54" stroke="#a0a0a0" stroke-width="1"/>
<path d="M51,163.5 H54" stroke="#a0a0a0" stroke-width="1"/>
<path d="M54.5,484 V491" stroke="#a0a0a0" stroke-width="1"/>
<path d="M108.5,484 V491" stroke="#a0a0a0" stroke-width="1"/>
<path d="M163.5,484 V491" stroke="#a0a0a0" stroke-width="1"/>
<path d="M217.5,484 V491" stroke="#a0a0a0" stroke-width="1"/>
<path d="M272.5,484 V491" stroke="#a0a0a0" stroke-width="1"/>
<path d="M326.5,484 V491" stroke="#a0a0a0" stroke-width="1"/>
<path d="M380.5,484 V491" stroke="#a0a0a0" stroke-width="1"/>
<path d="M435.5,484 V491" stroke="#a0a0a0" stroke-width="1"/>
<path d="M489.5,484 V491" stroke="#a0a0a0" stroke-width="1"/>
</svg>
<div class="t" style="left:198px;top:36px;font-size:15px;font-weight:bold;color:#000;letter-spacing:-0.12px;">Apples &amp; 2 more vs. Date</div>
<div class="box" style="left:55px;top:57px;width:478px;height:34px;line-height:34px;">Group X</div>
<div class="box" style="left:535px;top:57px;width:34px;height:34px;line-height:34px;">Wrap</div>
<div class="box" style="left:571px;top:57px;width:98px;height:33px;line-height:33px;">Overlay</div>
<div class="box" style="left:571px;top:92px;width:98px;height:33px;line-height:33px;">Color</div>
<div class="box" style="left:571px;top:127px;width:98px;height:33px;line-height:33px;">Size</div>
<div class="box" style="left:571px;top:162px;width:98px;height:33px;line-height:33px;">Interval</div>
<div class="box" style="left:535px;top:93px;width:34px;height:390px;"></div>
<div style="position:absolute;left:534px;top:92px;width:1px;height:392px;background:#a0a0a0"></div>
<div class="t" style="left:552px;top:288px;transform:translate(-50%,-50%) rotate(90deg);font-weight:bold;font-size:12px;color:#8c8c8c;">Group Y</div>
<div class="box" style="left:3px;top:485px;width:50px;height:48px;line-height:16px;padding-top:8px;">Map<br>Shape</div>
<div style="position:absolute;left:48px;top:484px;width:7px;height:1px;background:#a4a4a4"></div>
<div class="box" style="left:535px;top:485px;width:34px;height:48px;line-height:47px;">Freq</div>
<div class="box" style="left:571px;top:485px;width:98px;height:48px;line-height:47px;">Page</div>
<div class="t" style="left:29px;top:122px;font-size:12px;letter-spacing:-0.5px;">2.5</div>
<div class="t" style="left:29px;top:193px;font-size:12px;letter-spacing:-0.5px;">2.0</div>
<div class="t" style="left:29px;top:264px;font-size:12px;letter-spacing:-0.5px;">1.5</div>
<div class="t" style="left:29px;top:335px;font-size:12px;letter-spacing:-0.5px;">1.0</div>
<div class="t" style="left:29px;top:406px;font-size:12px;letter-spacing:-0.5px;">0.5</div>
<div class="t" style="left:29px;top:478px;font-size:12px;letter-spacing:-0.5px;">0.0</div>
<div class="t" style="left:13px;top:287px;transform:translate(-50%,-50%) rotate(-90deg);font-size:12px;">Apples &amp; 2 more</div>
<div class="t" style="left:44.5px;top:492px;font-size:12px;letter-spacing:-0.33px;">01Jan1980</div>
<div class="t" style="left:135.5px;top:492px;font-size:12px;letter-spacing:-0.33px;">01Jan1986</div>
<div class="t" style="left:243.5px;top:492px;font-size:12px;letter-spacing:-0.33px;">01Jan1992</div>
<div class="t" style="left:352.5px;top:492px;font-size:12px;letter-spacing:-0.33px;">01Jan1998</div>
<div class="t" style="left:461.5px;top:492px;font-size:12px;letter-spacing:-0.33px;">01Jan2004</div>
<div class="t" style="left:281px;top:508px;font-size:12px;">Date</div>
<div style="position:absolute;left:575px;top:199px;width:21px;height:12px;background:#4470d8"></div>
<div style="position:absolute;left:575px;top:214px;width:21px;height:12px;background:#d24a5a"></div>
<div style="position:absolute;left:575px;top:229px;width:21px;height:12px;background:#3faa48"></div>
<div class="t" style="left:599px;top:199px;font-size:12px;letter-spacing:-0.1px;">Apples</div>
<div class="t" style="left:599px;top:214px;font-size:12px;letter-spacing:-0.35px;">Bananas</div>
<div class="t" style="left:599px;top:229px;font-size:12px;letter-spacing:-0.2px;">Bread</div>
</body></html>
